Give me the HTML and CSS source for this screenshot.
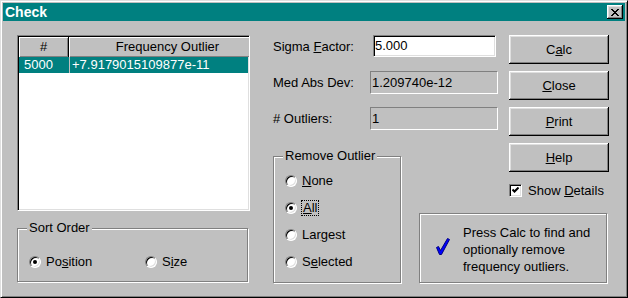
FILE: index.html
```html
<!DOCTYPE html>
<html lang="en">
<head>
    <meta charset="UTF-8">
    <title>Check</title>
    <link rel="stylesheet" href="styles.css">
</head>
<body>
    <div class="window">
        <div class="titlebar">
            <span class="title">Check</span>
            <span class="close-btn">
                <svg width="8" height="7" viewBox="0 0 8 7"><path d="M0 0h2v1H0zM6 0h2v1H6zM1 1h2v1H1zM5 1h2v1H5zM2 2h4v1H2zM3 3h2v1H3zM2 4h4v1H2zM1 5h2v1H1zM5 5h2v1H5zM0 6h2v1H0zM6 6h2v1H6z" fill="#000"/></svg>
            </span>
        </div>

        <div class="dialog">
            <div class="left-col">
                <div class="listbox">
                    <div class="list-head">
                        <div class="head-cell col-num">#</div>
                        <div class="head-cell col-freq">Frequency Outlier</div>
                    </div>
                    <div class="list-row selected">
                        <div class="cell col-num">5000</div>
                        <div class="cell col-freq">+7.9179015109877e-11</div>
                    </div>
                </div>

                <fieldset class="group sort-group">
                    <legend>Sort Order</legend>
                    <div class="radio-line">
                        <label class="radio-item pos-item"><span class="radio checked"></span><span>Po<u>s</u>ition</span></label>
                        <label class="radio-item"><span class="radio"></span><span>S<u>i</u>ze</span></label>
                    </div>
                </fieldset>
            </div>

            <div class="right-col">
                <div class="field-grid">
                    <span class="field-label">Sigma <u>F</u>actor:</span>
                    <div class="edit-box">5.000</div>
                    <button class="win-btn">C<u>a</u>lc</button>

                    <span class="field-label">Med Abs Dev:</span>
                    <div class="read-box">1.209740e-12</div>
                    <button class="win-btn"><u>C</u>lose</button>

                    <span class="field-label"># Outliers:</span>
                    <div class="read-box">1</div>
                    <button class="win-btn"><u>P</u>rint</button>
                </div>

                <div class="lower">
                    <fieldset class="group remove-group">
                        <legend>Remove Outlier</legend>
                        <div class="radio-list">
                            <label class="radio-item"><span class="radio"></span><span><u>N</u>one</span></label>
                            <label class="radio-item"><span class="radio checked"></span><span class="focus-rect"><u>A</u>ll</span></label>
                            <label class="radio-item"><span class="radio"></span><span>Lar<u>g</u>est</span></label>
                            <label class="radio-item"><span class="radio"></span><span>S<u>e</u>lected</span></label>
                        </div>
                    </fieldset>

                    <div class="side">
                        <button class="win-btn help-btn"><u>H</u>elp</button>
                        <label class="check-row">
                            <span class="checkbox">
                                <svg width="7" height="7" viewBox="0 0 7 7"><path d="M0.5 2.5 L2.5 4.5 L6.5 0.5" fill="none" stroke="#000" stroke-width="2"/></svg>
                            </span>
                            <span>Show <u>D</u>etails</span>
                        </label>
                        <div class="info-box">
                            <svg class="info-icon" width="14" height="18" viewBox="0 0 14 18">
                                <path d="M0.5 9.5 L2.5 8.5 L4.5 12.5 L11.5 0.5 L13.5 1.5 L5.5 16.5 L3.5 16.5 Z" fill="#0000ff" stroke="#000080" stroke-width="1" stroke-linejoin="round"/>
                            </svg>
                            <p>Press Calc to find and<br>optionally remove<br>frequency outliers.</p>
                        </div>
                    </div>
                </div>
            </div>
        </div>
    </div>
</body>
</html>
```

FILE: styles.css
```css
body {
    margin: 0;
    background: #c0c0c0;
    font-family: "Liberation Sans", Arial, sans-serif;
    font-size: 13px;
    color: #000;
}
.window {
    width: 628px;
    height: 298px;
    box-sizing: border-box;
    padding: 2px;
    background: #c0c0c0;
    border: 1px solid;
    border-color: #dfdfdf #000 #000 #dfdfdf;
    box-shadow: inset 1px 1px #fff, inset -1px -1px #808080;
}
.titlebar {
    height: 18px;
    background: #008080;
    display: flex;
    align-items: center;
    justify-content: space-between;
    padding: 0 2px;
}
.title {
    color: #fff;
    font-weight: bold;
    font-size: 14px;
}
.close-btn {
    width: 16px;
    height: 14px;
    background: #c0c0c0;
    display: flex;
    align-items: center;
    justify-content: center;
    box-shadow: inset -1px -1px #000, inset 1px 1px #fff, inset -2px -2px #808080, inset 2px 2px #dfdfdf;
}
.dialog {
    display: flex;
    gap: 23px;
    padding: 14px 0 0 14px;
}
.left-col {
    width: 233px;
}
.listbox {
    width: 233px;
    height: 176px;
    box-sizing: border-box;
    background: #fff;
    border: 1px solid;
    border-color: #808080 #fff #fff #808080;
    box-shadow: inset 1px 1px #000, inset -1px -1px #dfdfdf;
    padding: 1px;
    overflow: hidden;
}
.list-head, .list-row {
    display: flex;
    white-space: nowrap;
}
.head-cell {
    flex: none;
    height: 20px;
    line-height: 20px;
    text-align: center;
    background: #c0c0c0;
    box-sizing: border-box;
    box-shadow: inset 1px 1px #fff, inset -1px -1px #808080;
}
.head-cell.col-num {
    border-right: 1px solid #000;
}
.col-num {
    width: 50px;
    flex: none;
}
.col-freq {
    width: 197px;
    flex: none;
}
.list-row {
    height: 16px;
    line-height: 16px;
}
.list-row.selected {
    background: #008080;
    color: #fff;
}
.cell.col-num {
    padding-left: 5px;
    box-sizing: border-box;
}
.cell.col-freq {
    border-left: 1px solid #c0c0c0;
    padding-left: 2px;
}
.group {
    margin: 0;
    padding: 0;
    border: 1px solid #808080;
    box-shadow: inset 1px 1px #fff, 1px 1px #fff;
}
.group legend {
    margin-left: 9px;
    padding: 0 2px;
    line-height: 14px;
    background: #c0c0c0;
}
.sort-group {
    width: 231px;
    box-sizing: border-box;
    margin-top: 10px;
}
.radio-line {
    display: flex;
    padding: 19px 0 12px 11px;
}
.radio-item {
    display: flex;
    align-items: center;
    gap: 5px;
    height: 15px;
}
.pos-item {
    width: 116px;
}
.radio {
    flex: none;
    width: 12px;
    height: 12px;
    box-sizing: border-box;
    border-radius: 50%;
    background: #fff;
    border: 1px solid;
    border-color: #808080 #fff #fff #808080;
    box-shadow: inset 1px 1px #000, inset -1px -1px #dfdfdf;
    display: flex;
    align-items: center;
    justify-content: center;
}
.radio.checked::after {
    content: "";
    width: 4px;
    height: 4px;
    border-radius: 50%;
    background: #000;
}
.focus-rect {
    outline: 1px dotted #000;
    padding: 0 1px;
    line-height: 14px;
}
.right-col {
    width: 336px;
}
.field-grid {
    display: grid;
    grid-template-columns: 97px 139px 100px;
    grid-auto-rows: 29px;
    row-gap: 7px;
    align-items: start;
}
.field-label {
    line-height: 23px;
}
.edit-box {
    width: 123px;
    height: 22px;
    margin-left: 3px;
    box-sizing: border-box;
    background: #fff;
    border: 1px solid;
    border-color: #808080 #fff #fff #808080;
    box-shadow: inset 1px 1px #000, inset -1px -1px #dfdfdf;
    padding-left: 1px;
    line-height: 20px;
}
.read-box {
    width: 128px;
    height: 23px;
    box-sizing: border-box;
    border: 1px solid;
    border-color: #808080 #fff #fff #808080;
    padding-left: 1px;
    line-height: 21px;
}
.win-btn {
    width: 100px;
    height: 29px;
    padding: 0;
    border: none;
    background: #c0c0c0;
    font-family: inherit;
    font-size: 13px;
    color: #000;
    box-shadow: inset -1px -1px #000, inset 1px 1px #fff, inset -2px -2px #808080, inset 2px 2px #dfdfdf;
}
.lower {
    display: flex;
    gap: 18px;
    margin-top: 7px;
    align-items: flex-start;
}
.remove-group {
    width: 128px;
    height: 134px;
    box-sizing: border-box;
    margin-top: 6px;
}
.radio-list {
    display: flex;
    flex-direction: column;
    gap: 12px;
    padding: 10px 0 0 11px;
}
.side {
    width: 190px;
    display: flex;
    flex-direction: column;
}
.help-btn {
    align-self: flex-end;
}
.check-row {
    display: flex;
    align-items: center;
    gap: 6px;
    margin: 11px 0 0 90px;
    line-height: 15px;
}
.checkbox {
    width: 13px;
    height: 13px;
    box-sizing: border-box;
    background: #fff;
    border: 1px solid;
    border-color: #808080 #fff #fff #808080;
    box-shadow: inset 1px 1px #000, inset -1px -1px #dfdfdf;
    display: flex;
    align-items: center;
    justify-content: center;
}
.info-box {
    width: 188px;
    height: 70px;
    box-sizing: border-box;
    margin-top: 15px;
    border: 1px solid #808080;
    box-shadow: inset 1px 1px #fff, 1px 1px #fff;
    display: flex;
    align-items: center;
    padding: 2px 0 0 16px;
    gap: 13px;
}
.info-icon {
    flex: none;
    margin-top: -4px;
}
.info-box p {
    margin: 0;
    line-height: 17px;
}
```
